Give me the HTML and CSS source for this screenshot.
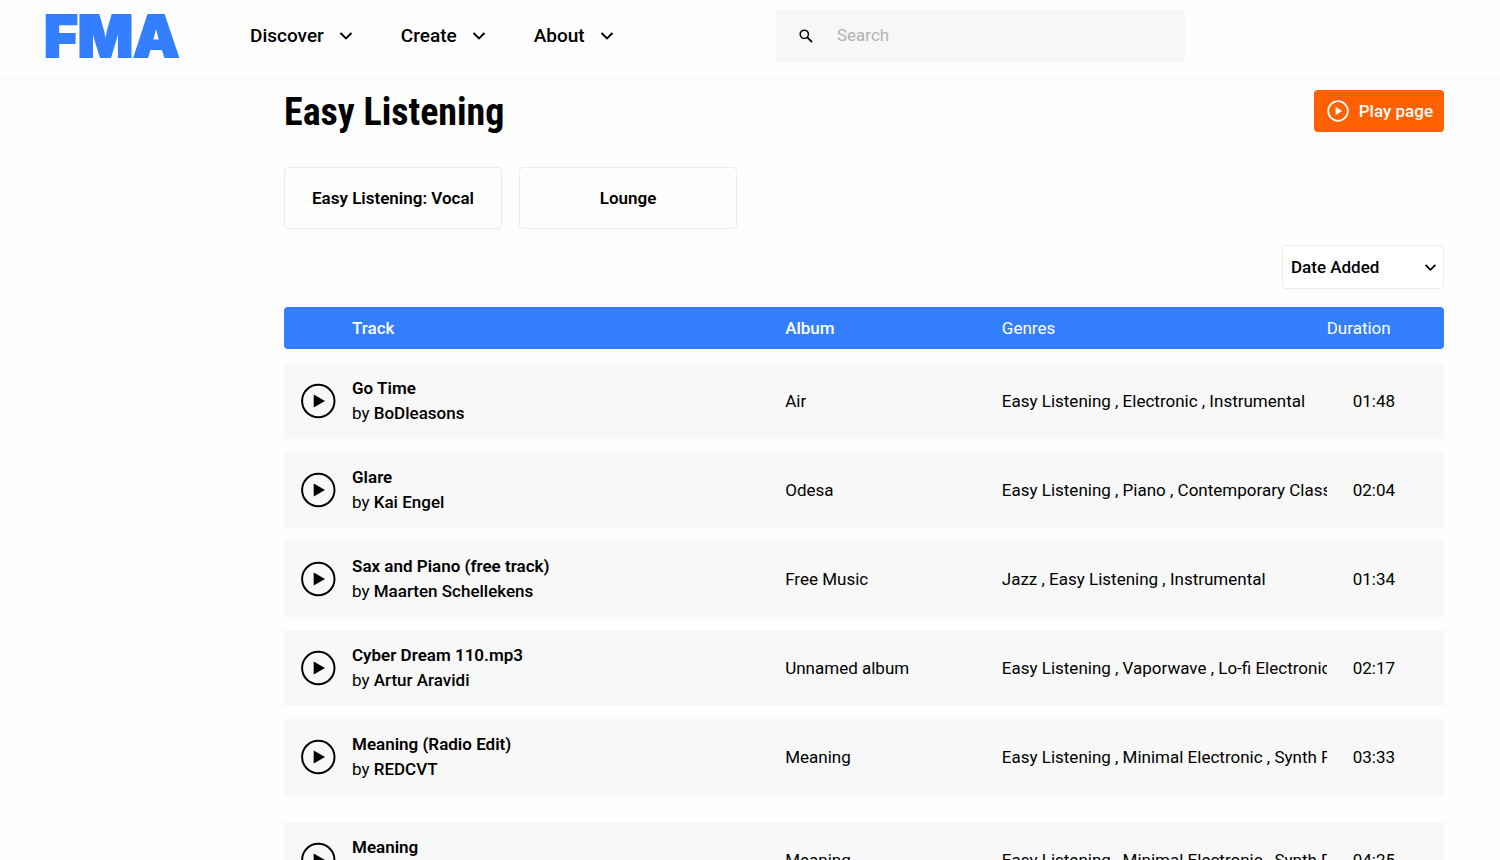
FILE: index.html
```html
<!DOCTYPE html>
<html lang="en">
<head>
<meta charset="utf-8">
<meta name="viewport" content="width=device-width, initial-scale=1">
<title>Easy Listening - FMA</title>
<link rel="stylesheet" href="styles.css">
</head>
<body>
<svg class="defs" width="0" height="0" aria-hidden="true">
  <symbol id="chevron" viewBox="0 0 14 10"><path d="M1.5 2 7 7.5 12.5 2" fill="none" stroke="currentColor" stroke-width="1.9"/></symbol>
  <symbol id="play" viewBox="0 0 36 36"><circle cx="18.3" cy="18" r="16.2" fill="none" stroke="currentColor" stroke-width="2"/><path d="M13.7 11.5v13L25 18z" fill="currentColor"/></symbol>
</svg>
<header class="topbar">
  <a class="logo" href="#">FMA</a>
  <nav class="nav">
    <button class="nav-item" type="button">Discover <svg class="chevron"><use href="#chevron"/></svg></button>
    <button class="nav-item" type="button">Create <svg class="chevron"><use href="#chevron"/></svg></button>
    <button class="nav-item" type="button">About <svg class="chevron"><use href="#chevron"/></svg></button>
  </nav>
  <form class="search">
    <svg class="search-icon" viewBox="0 0 14 14"><circle cx="5.3" cy="5.3" r="4.1" fill="none" stroke="#000" stroke-width="1.5"/><path d="M8.3 8.3 13 13" stroke="#000" stroke-width="1.8"/></svg>
    <input class="search-input" type="search" placeholder="Search" aria-label="Search">
  </form>
</header>
<main class="content">
  <div class="title-row">
    <h1 class="title">Easy Listening</h1>
    <button class="play-page" type="button">
      <svg class="play-page-icon" viewBox="0 0 22 22"><circle cx="11" cy="11" r="9.8" fill="none" stroke="currentColor" stroke-width="1.8"/><path d="M8.6 6.8v8.4L15 11z" fill="currentColor"/></svg>
      Play page
    </button>
  </div>
  <div class="subgenres">
    <a class="subgenre" href="#">Easy Listening: Vocal</a>
    <a class="subgenre" href="#">Lounge</a>
  </div>
  <div class="sort">
    <select class="sort-select" aria-label="Sort by"><option>Date Added</option></select>
    <svg class="sort-chevron"><use href="#chevron"/></svg>
  </div>
  <table class="tracks">
    <thead class="tracks-head">
      <tr class="row"><td></td><th class="strong">Track</th><th class="strong">Album</th><th>Genres</th><th>Duration</th></tr>
    </thead>
    <tbody class="tracks-body">
      <tr class="row track">
        <td class="cell-play"><button class="play" type="button" aria-label="Play"><svg class="play-icon"><use href="#play"/></svg></button></td>
        <td class="cell-track"><a class="name" href="#">Go Time</a><div>by <a class="artist" href="#">BoDleasons</a></div></td>
        <td>Air</td><td class="genres">Easy Listening , Electronic , Instrumental</td><td class="time">01:48</td>
      </tr>
      <tr class="row track">
        <td class="cell-play"><button class="play" type="button" aria-label="Play"><svg class="play-icon"><use href="#play"/></svg></button></td>
        <td class="cell-track"><a class="name" href="#">Glare</a><div>by <a class="artist" href="#">Kai Engel</a></div></td>
        <td>Odesa</td><td class="genres">Easy Listening , Piano , Contemporary Classical</td><td class="time">02:04</td>
      </tr>
      <tr class="row track">
        <td class="cell-play"><button class="play" type="button" aria-label="Play"><svg class="play-icon"><use href="#play"/></svg></button></td>
        <td class="cell-track"><a class="name" href="#">Sax and Piano (free track)</a><div>by <a class="artist" href="#">Maarten Schellekens</a></div></td>
        <td>Free Music</td><td class="genres">Jazz , Easy Listening , Instrumental</td><td class="time">01:34</td>
      </tr>
      <tr class="row track">
        <td class="cell-play"><button class="play" type="button" aria-label="Play"><svg class="play-icon"><use href="#play"/></svg></button></td>
        <td class="cell-track"><a class="name" href="#">Cyber Dream 110.mp3</a><div>by <a class="artist" href="#">Artur Aravidi</a></div></td>
        <td>Unnamed album</td><td class="genres">Easy Listening , Vaporwave , Lo-fi Electronic</td><td class="time">02:17</td>
      </tr>
      <tr class="row track">
        <td class="cell-play"><button class="play" type="button" aria-label="Play"><svg class="play-icon"><use href="#play"/></svg></button></td>
        <td class="cell-track"><a class="name" href="#">Meaning (Radio Edit)</a><div>by <a class="artist" href="#">REDCVT</a></div></td>
        <td>Meaning</td><td class="genres">Easy Listening , Minimal Electronic , Synth Pop</td><td class="time">03:33</td>
      </tr>
    </tbody>
    <tbody class="tracks-body tracks-more">
      <tr class="row track">
        <td class="cell-play"><button class="play" type="button" aria-label="Play"><svg class="play-icon"><use href="#play"/></svg></button></td>
        <td class="cell-track"><a class="name" href="#">Meaning</a><div>by <a class="artist" href="#">REDCVT</a></div></td>
        <td>Meaning</td><td class="genres">Easy Listening , Minimal Electronic , Synth Pop</td><td class="time">04:25</td>
      </tr>
    </tbody>
  </table>
</main>
</body>
</html>
```
FILE: styles.css
```css
* { box-sizing: border-box; }

body {
  margin: 0;
  background: #fefefe;
  color: #000;
  font: 400 17px/25px Roboto, "Liberation Sans", sans-serif;
}

a { color: inherit; text-decoration: none; }
button, input, select { font: inherit; color: inherit; }
button { border: 0; background: none; cursor: pointer; }
.defs { display: block; height: 0; }

.topbar {
  display: grid;
  grid-template-columns: 206px 1fr 409px 315px;
  align-items: center;
  height: 79px;
  padding: 0 0 7px 44px;
  border-bottom: 1px solid #f6f6f6;
}

.logo {
  color: #337fff;
  font: 900 58px/58px Inter, Roboto, sans-serif;
  -webkit-text-stroke: 2px #337fff;
}

.nav { display: flex; gap: 48px; }

.nav-item {
  display: flex;
  align-items: center;
  gap: 15px;
  padding: 0;
  font-size: 19px;
  font-weight: 500;
}

.chevron { width: 14px; height: 10px; }

.search {
  display: flex;
  align-items: center;
  gap: 24px;
  height: 54px;
  padding: 0 23px;
  border-radius: 4px;
  background: #f7f7f7;
}

.search-icon { width: 14px; height: 14px; flex: none; }

.search-input {
  flex: 1;
  min-width: 0;
  padding: 0;
  border: 0;
  outline: 0;
  background: none;
}

.search-input::placeholder { color: #b3b3b3; opacity: 1; }

.content { padding: 11px 56px 0 284px; }

.title-row {
  display: flex;
  justify-content: space-between;
  align-items: flex-start;
}

.title {
  margin: 0;
  font: 700 38px/44px "Roboto Condensed", Roboto, sans-serif;
}

.play-page {
  display: flex;
  align-items: center;
  gap: 10px;
  height: 42px;
  padding: 0 11px 0 13px;
  border-radius: 4px;
  background: #ff6000;
  color: #fff;
  font-weight: 500;
}

.play-page-icon { width: 22px; height: 22px; }

.subgenres { display: flex; gap: 17px; margin-top: 33px; }

.subgenre {
  display: flex;
  align-items: center;
  justify-content: center;
  width: 218px;
  height: 62px;
  border: 1px solid #ececf0;
  border-radius: 4px;
  font-weight: 600;
}

.sort {
  position: relative;
  width: 162px;
  margin: 16px 0 0 auto;
}

.sort-select {
  display: block;
  width: 100%;
  height: 44px;
  padding: 0 8px;
  border: 1px solid #ececf0;
  border-radius: 4px;
  background: #fff;
  font-weight: 500;
  appearance: none;
}

.sort-chevron {
  position: absolute;
  top: 18px;
  right: 7px;
  width: 13px;
  height: 9px;
  pointer-events: none;
}

.tracks { display: block; margin-top: 18px; }
.tracks-head { display: block; }

.row {
  display: grid;
  grid-template-columns: 68px 4fr 2fr 3fr 1fr;
  align-items: center;
  padding-right: 9px;
}

.row th, .row td { padding: 0; min-width: 0; text-align: left; }

.tracks-head .row {
  height: 42px;
  border-radius: 4px;
  background: #337fff;
  color: #fff;
}

.tracks-head th { font-weight: 400; }
.tracks-head .strong { font-weight: 500; }

.tracks-body {
  display: flex;
  flex-direction: column;
  gap: 13px;
  margin-top: 14px;
}

.tracks-more { margin-top: 27px; }

.track { height: 76px; background: #f8f8f8; }
.row .cell-play { padding-left: 16px; }
.play { display: block; padding: 0; }
.play-icon { display: block; width: 36px; height: 36px; }
.name { font-weight: 600; }
.artist { font-weight: 500; }
.genres { overflow: hidden; white-space: nowrap; }
.row .time { padding-left: 26px; }
```
